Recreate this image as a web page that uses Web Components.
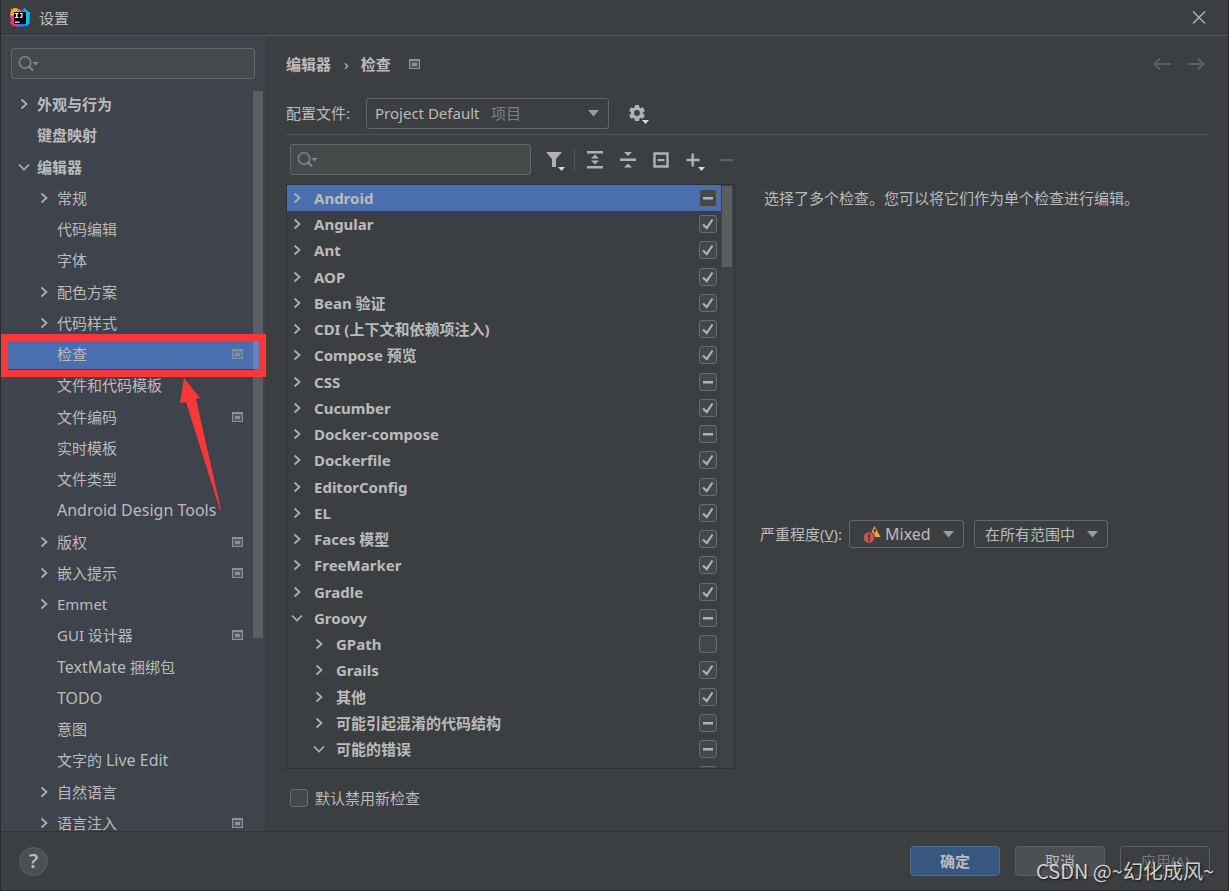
<!DOCTYPE html>
<html lang="zh-CN">
<head>
<meta charset="utf-8">
<title>设置</title>
<style>
  html, body { margin: 0; height: 100%; background: #3c3f41; }
  body { font: 15px/20px "Noto Sans", "Noto Sans CJK SC", sans-serif; color: #bbbbbb; overflow: hidden; }
</style>
</head>
<body>
<settings-dialog></settings-dialog>

<script>
const reset = `
  *, *::before, *::after { box-sizing: border-box; }
  button, input, select { font: inherit; color: inherit; margin: 0; }
  button { background: none; border: 0; padding: 0; }
  a { color: inherit; text-decoration: none; }
  :host([hidden]) { display: none; }
`;

function define(name, css, render, after) {
  customElements.define(name, class extends HTMLElement {
    constructor() {
      super();
      this.attachShadow({ mode: 'open' });
    }
    connectedCallback() {
      if (this.shadowRoot.childNodes.length) return;
      const t = document.createElement('template');
      t.innerHTML = `<style>${reset}${css}</style>${render(this)}`;
      this.shadowRoot.append(t.content.cloneNode(true));
      if (after) after(this, this.shadowRoot);
    }
  });
}

const icons = {
  right: [16, 16, '<path d="M5.500 3.500 10.500 8 5.500 12.500" fill="none" stroke="#afb1b3" stroke-width="1.700"/>'],
  down: [16, 16, '<path d="M3 5.500 8 10.500 13 5.500" fill="none" stroke="#afb1b3" stroke-width="1.700"/>'],
  project: [11, 10, '<path fill="#87939a" fill-rule="evenodd" d="M0 0h11v10H0zM1 2v7h9V2z"/><path fill="#87939a" fill-opacity=".3" d="M1 2h9v7H1z"/><path fill="#87939a" d="M3 4h5v3H3z"/>'],
  search: [22, 18, '<circle cx="7" cy="7.500" r="5.700" fill="none" stroke="#7c8a92" stroke-width="1.500"/><path d="m11 11.500 4 4" stroke="#7c8a92" stroke-width="2"/><path d="M14.500 7h6l-3 3.500z" fill="#7c8a92"/>'],
  caret: [12, 8, '<path d="M1 1h11L6.500 7.500z" fill="#9a9da0"/>'],
  close: [14, 14, '<path d="M1 1.500 13 13.500M13 1.500 1 13.500" stroke="#b9bbbd" stroke-width="1.200"/>'],
  back: [18, 14, '<path d="M17 7H2M7 1.500 1.500 7 7 12.500" fill="none" stroke="#5d6062" stroke-width="2"/>'],
  forward: [18, 14, '<path d="M1 7h15M11 1.500 16.500 7 11 12.500" fill="none" stroke="#5d6062" stroke-width="2"/>'],
  gear: [26, 26, '<g transform="translate(12 13)" fill="#afb1b3"><path d="M-2-8h4l.6 3h-5.200zM-2 8h4l.6-3h-5.200z"/><path transform="rotate(60)" d="M-2-8h4l.6 3h-5.200zM-2 8h4l.6-3h-5.200z"/><path transform="rotate(120)" d="M-2-8h4l.6 3h-5.200zM-2 8h4l.6-3h-5.200z"/><circle r="4.500" fill="none" stroke="#afb1b3" stroke-width="3.200"/></g><path d="M17 20h7l-3.500 4z" fill="#d5d7d9"/>'],
  filter: [26, 26, '<path d="M4 5h16l-6 7v8h-4v-8z" fill="#afb1b3"/><path d="M16 20h7l-3.500 4z" fill="#d5d7d9"/>'],
  expand: [26, 26, '<path d="M5 4h16v2.500H5zM5 19h16v2.500H5zM13 7.500l4 4H9zM13 17.500l4-4H9z" fill="#afb1b3"/>'],
  collapse: [26, 26, '<path d="M5 11.500h16V14H5zM9 5h8l-4 4zM9 20.500h8l-4-4z" fill="#afb1b3"/>'],
  reset: [26, 26, '<path d="M6.500 6.500h13v13h-13z" fill="none" stroke="#afb1b3" stroke-width="2.400"/><path d="M9.500 12h7v2.200h-7z" fill="#afb1b3"/>'],
  plus: [26, 26, '<path d="M10.500 6.500h2.400v5.300h5.600v2.400h-5.600v5.300h-2.400v-5.300H5.500v-2.400h5z" fill="#afb1b3"/><path d="M17 20h7l-3.500 4z" fill="#d5d7d9"/>'],
  minus: [26, 26, '<path d="M6 12h13v2.200H6z" fill="#5f6264"/>'],
  mixed: [18, 18, '<path d="M11.500 1 17.500 12H6z" fill="#f0a732"/><path d="M10.800 4h2v3.500h-2z" fill="#3c3f41"/><circle cx="6" cy="12.500" r="6" fill="#3c3f41"/><circle cx="6" cy="12.500" r="5.300" fill="#c75450"/><path d="M5 9.200h2v4H5zM5 14.300h2v1.800H5z" fill="#3c3f41"/>'],
  logo: [20, 20, '<path d="M1 1 6 0l6 3-6 9-6-3z" fill="#fc801d"/><path d="M0 8l4-2 7 7-1 6-7-1-3-3 1-3z" fill="#fe2889"/><path d="M4 0l4 1-5 7-3-1z" fill="#fdb60d"/><path d="M12 2l2-2 5 4 1 12-8 3-4 0 1-5z" fill="#087cfa"/><path d="M14 0l4 4 2 0-1 11-3 4-1-13z" fill="#07c3f2"/><path d="M4 4h12v12H4z"/><path d="M5 5h3.500v1H7.400v3h1.100v1H5V9h1.100V6H5zM10 5h2.500v3.500c0 1-.6 1.500-1.500 1.500-.7 0-1.200-.3-1.500-.7l.7-.7c.5.500 1.100.4 1.100-.2V6H10zM5 13.500h4.500v1.200H5z" fill="#fff"/>']
};

define('ui-icon', `:host { display: inline-flex; flex: none; } svg { display: block; }`, el => {
  const [w, h, body] = icons[el.getAttribute('name')];
  return `<svg width="${w}" height="${h}" viewBox="0 0 ${w} ${h}" aria-hidden="true">${body}</svg>`;
});

define('search-box', `
  :host { display: grid; align-items: center; height: 31px; }
  input { grid-area: 1 / 1; width: 100%; height: 100%; padding: 0 8px 0 32px; background: #45494a;
    border: 1px solid #646768; border-radius: 3px; outline: none; }
  ui-icon { grid-area: 1 / 1; margin-left: 7px; pointer-events: none; z-index: 1; }
`, el => `<input type="text" aria-label="${el.getAttribute('label')}"><ui-icon name="search"></ui-icon>`);

define('nav-item', `
  :host { display: block; height: 31px; }
  :host(:nth-child(4n + 2)) { height: 32px; }
  a { display: flex; align-items: center; height: 100%; padding: 0 22px 0 15px; }
  :host([level="1"]) a { padding-left: 35px; }
  :host([bold]) { font-weight: 700; }
  :host([selected]) { background: #4b6eaf; }
  .arrow { width: 16px; margin-right: 5px; display: flex; }
  .name { flex: 1; white-space: nowrap; }
  ::slotted(span) { font-size: 16px; }
`, el => `<a href="#"><span class="arrow">${el.hasAttribute('arrow') ? `<ui-icon name="${el.getAttribute('arrow')}"></ui-icon>` : ''}</span>
  <span class="name"><slot></slot></span>${el.hasAttribute('project') ? '<ui-icon name="project"></ui-icon>' : ''}</a>`);

define('check-box', `
  :host { display: inline-flex; }
  label { display: flex; align-items: center; gap: 7px; }
  .box { display: grid; }
  .box > * { grid-area: 1 / 1; }
  input { appearance: none; width: 18px; height: 18px; background: #43494a; border: 1px solid #6b6b6b; border-radius: 3px; }
  svg { display: none; pointer-events: none; z-index: 1; }
  input:checked ~ .on, input:indeterminate ~ .mix { display: block; }
`, el => `<label><span class="box"><input type="checkbox" ${el.getAttribute('state') === 'on' ? 'checked' : ''} ${el.hasAttribute('label') ? `aria-label="${el.getAttribute('label')}"` : ''}>
  <svg class="on" width="18" height="18"><path d="M4 9.500 7.700 13 13.500 4.500" fill="none" stroke="#afb1b3" stroke-width="2.200"/></svg>
  <svg class="mix" width="18" height="18"><path d="M4 8h10v2.500H4z" fill="#afb1b3"/></svg></span><slot></slot></label>`,
(el, root) => { root.querySelector('input').indeterminate = el.getAttribute('state') === 'mix'; });

define('inspection-row', `
  :host { display: flex; align-items: center; height: 26px; flex: none; padding: 0 4px 0 2px; font-weight: 700; }
  :host(:nth-child(4n)) { height: 27px; }
  :host([level="1"]) { padding-left: 24px; }
  :host([selected]) { background: #4b6eaf; }
  button { display: flex; width: 16px; margin-right: 9px; }
  .name { flex: 1; white-space: nowrap; }
`, el => `<button type="button" aria-label="展开"><ui-icon name="${el.hasAttribute('open') ? 'down' : 'right'}"></ui-icon></button>
  <span class="name"><slot></slot></span><check-box state="${el.getAttribute('state')}" label="${el.textContent}"></check-box>`);

define('tool-button', `
  :host { display: block; }
  button { display: grid; place-items: center; width: 32px; height: 26px; }
`, el => `<button type="button" aria-label="${el.getAttribute('label')}"><ui-icon name="${el.getAttribute('icon')}"></ui-icon></button>`);

define('drop-down', `
  :host { display: grid; align-items: center; height: 28px; }
  select { grid-area: 1 / 1; appearance: none; width: 100%; height: 100%; padding: 0 28px 0 var(--inset, 8px);
    background: #3c3f41; border: 1px solid #646768; border-radius: 3px; outline: none; }
  slot, .caret { grid-area: 1 / 1; pointer-events: none; z-index: 1; }
  .caret { justify-self: end; margin-right: 10px; }
  ::slotted(*) { grid-area: 1 / 1; z-index: 1; pointer-events: none; }
`, el => `<select aria-label="${el.getAttribute('label')}"><option>${el.getAttribute('value')}</option></select>
  <slot></slot><ui-icon class="caret" name="caret"></ui-icon>`);

define('push-button', `
  :host { display: block; }
  button { width: 90px; height: 30px; border: 1px solid #5e6060; border-radius: 4px; background: #4c5052; }
  :host([primary]) button { background: #365880; border-color: #4c708c; font-weight: 700; }
  :host([disabled]) button { background: #3c3f41; color: #777777; }
`, el => `<button type="button" ${el.hasAttribute('disabled') ? 'disabled' : ''}><slot></slot></button>`);

define('scroll-thumb', `
  :host { display: block; background: rgba(255, 255, 255, .15); }
`, () => '');

define('title-bar', `
  :host { display: flex; align-items: center; height: 36px; padding: 0 22px 0 9px; border-bottom: 1px solid #515456; }
  h1 { flex: 1; margin: 0 0 0 9px; font: inherit; }
`, () => `<ui-icon name="logo"></ui-icon><h1>设置</h1><button type="button" aria-label="关闭"><ui-icon name="close"></ui-icon></button>`);

/* rows: [name, level, arrow, project marker] */
const nav = [
  ['外观与行为', 0, 'right'], ['键盘映射', 0], ['编辑器', 0, 'down'], ['常规', 1, 'right'], ['代码编辑', 1],
  ['字体', 1], ['配色方案', 1, 'right'], ['代码样式', 1, 'right'], ['检查', 1, '', 1], ['文件和代码模板', 1],
  ['文件编码', 1, '', 1], ['实时模板', 1], ['文件类型', 1], ['<span>Android Design Tools</span>', 1], ['版权', 1, 'right', 1],
  ['嵌入提示', 1, 'right', 1], ['Emmet', 1, 'right'], ['GUI 设计器', 1, '', 1], ['<span>TextMate</span> 捆绑包', 1], ['<span>TODO</span>', 1],
  ['意图', 1], ['文字的 <span>Live Edit</span>', 1], ['自然语言', 1, 'right'], ['语言注入', 1, 'right', 1]
];

define('side-bar', `
  :host { position: relative; display: flex; flex-direction: column; min-height: 0; background: #3e434c; }
  search-box { margin: 12px 10px 9px; flex: none; }
  nav { flex: 1; min-height: 0; overflow: hidden; }
  scroll-thumb { position: absolute; right: 2px; top: 55px; width: 10px; height: 547px; }
  .frame { position: absolute; left: 0; right: -1px; top: 298px; height: 43px; border: 7px solid #fd3737; z-index: 2; pointer-events: none; }
  .pointer { position: absolute; left: 177px; top: 341px; z-index: 2; pointer-events: none; }
`, () => `<search-box label="搜索设置"></search-box><nav aria-label="设置">${nav.map(([n, l, a, p]) =>
  `<nav-item level="${l}" ${l ? '' : 'bold'} ${a ? `arrow="${a}"` : ''} ${p ? 'project' : ''} ${n === '检查' ? 'selected' : ''}>${n}</nav-item>`).join('')}</nav>
  <scroll-thumb></scroll-thumb><div class="frame"></div>
  <svg class="pointer" width="44" height="136" aria-hidden="true"><path d="M6 1 22 21 18 22 43 133 42 133 8 25 2 26z" fill="#fd3737"/></svg>`);

/* rows: [name, state, level, open] */
const rows = [
  ['Android', 'mix'], ['Angular', 'on'], ['Ant', 'on'], ['AOP', 'on'], ['Bean 验证', 'on'], ['CDI (上下文和依赖项注入)', 'on'],
  ['Compose 预览', 'on'], ['CSS', 'mix'], ['Cucumber', 'on'], ['Docker-compose', 'mix'], ['Dockerfile', 'on'],
  ['EditorConfig', 'on'], ['EL', 'on'], ['Faces 模型', 'on'], ['FreeMarker', 'on'], ['Gradle', 'on'],
  ['Groovy', 'mix', 0, 1], ['GPath', 'off', 1], ['Grails', 'on', 1], ['其他', 'on', 1],
  ['可能引起混淆的代码结构', 'mix', 1], ['可能的错误', 'mix', 1, 1]
];

define('inspection-list', `
  :host { display: grid; grid-template-columns: 1fr 13px; min-height: 0; border: 1px solid #2f3133; overflow: hidden; }
  .rows { display: flex; flex-direction: column; min-height: 0; overflow: hidden; }
  .track { background: #3f4244; }
  scroll-thumb { margin: 1px 2px 0 1px; height: 81px; }
  .next { flex: none; align-self: end; margin: 4px 4px 0 0; }
`, () => `<div class="rows">${rows.map(([n, s, l = 0, o], i) =>
  `<inspection-row level="${l}" state="${s}" ${o ? 'open' : ''} ${i ? '' : 'selected'}>${n}</inspection-row>`).join('')}
  <check-box class="next" state="off" label="下一项"></check-box></div>
  <div class="track"><scroll-thumb></scroll-thumb></div>`);

define('inspections-page', `
  :host { display: flex; flex-direction: column; min-width: 0; min-height: 0; padding: 0 20px 0 21px; }
  header { display: flex; align-items: center; height: 56px; padding-right: 3px; font-weight: 700; }
  header .sep { margin: 0 12px 0 13px; font-weight: 400; }
  header .grow { flex: 1; }
  header ui-icon { margin-left: 18px; }
  header button { display: flex; }
  header button ui-icon { margin-left: 16px; }
  .profile { display: flex; align-items: center; height: 43px; border-bottom: 1px solid #515456; }
  .profile drop-down { width: 243px; height: 31px; margin: 0 13px 0 16px; }
  .profile .scope { margin-left: 125px; color: #808080; }
  .tools { display: flex; align-items: center; gap: 1px; height: 49px; padding-left: 4px; }
  .tools search-box { width: 241px; margin-right: 7px; }
  .tools i { width: 1px; height: 24px; background: #515456; margin: 0 3px 0 2px; }
  .split { flex: 1; min-height: 0; display: grid; grid-template-columns: 1fr 1fr; gap: 24px; }
  .detail { display: grid; grid-template-rows: 336px auto; align-content: start; padding-left: 1px; }
  .detail p { margin: 4px; }
  .severity { display: flex; align-items: center; }
  .severity .mixed { width: 115px; margin: 0 10px 0 7px; --inset: 35px; font-size: 16px; }
  .severity .mixed ui-icon { margin-left: 14px; }
  .severity .mixed, .severity .scopes { flex: none; }
  .severity .scopes { width: 134px; --inset: 10px; }
  footer { display: flex; align-items: center; height: 62px; padding: 0 0 4px 4px; }
`, () => `<header><span>编辑器</span><span class="sep">›</span><span>检查</span><ui-icon name="project"></ui-icon><span class="grow"></span>
    <button type="button" aria-label="后退"><ui-icon name="back"></ui-icon></button>
    <button type="button" aria-label="前进"><ui-icon name="forward"></ui-icon></button></header>
  <div class="profile"><span>配置文件:</span><drop-down label="配置文件" value="Project Default"><span class="scope">项目</span></drop-down>
    <tool-button icon="gear" label="配置文件操作"></tool-button></div>
  <div class="tools"><search-box label="搜索检查"></search-box><tool-button icon="filter" label="筛选"></tool-button><i></i>
    <tool-button icon="expand" label="全部展开"></tool-button><tool-button icon="collapse" label="全部收起"></tool-button>
    <tool-button icon="reset" label="重置"></tool-button><tool-button icon="plus" label="添加"></tool-button><tool-button icon="minus" label="移除"></tool-button></div>
  <div class="split"><inspection-list></inspection-list>
    <div class="detail"><p>选择了多个检查。您可以将它们作为单个检查进行编辑。</p>
      <div class="severity"><span>严重程度(<u>V</u>):</span><drop-down class="mixed" label="严重程度" value="Mixed"><ui-icon name="mixed"></ui-icon></drop-down>
      <drop-down class="scopes" label="范围" value="在所有范围中"></drop-down></div></div></div>
  <footer><check-box state="off">默认禁用新检查</check-box></footer>`);

define('action-bar', `
  :host { position: relative; display: flex; align-items: center; gap: 15px; height: 59px; padding: 0 18px; border-top: 1px solid #313436; }
  .help { width: 29px; height: 29px; margin-right: auto; border-radius: 50%; background: #4c5052; border: 1px solid #5e6060; font-size: 20px; font-weight: 600; }
  .mark { position: absolute; right: 14px; bottom: 4px; font: 20px/30px "Noto Sans CJK SC", sans-serif; color: #d0d0d0; text-shadow: 1px 1px 2px #111; white-space: nowrap; pointer-events: none; }
`, () => `<button class="help" type="button" aria-label="帮助">?</button><push-button primary>确定</push-button><push-button>取消</push-button>
  <push-button disabled>应用(<u>A</u>)</push-button><span class="mark">CSDN @~幻化成风~</span>`);

define('settings-dialog', `
  :host { display: flex; flex-direction: column; height: 100vh; border: solid #2b2b2b; border-width: 0 1px 1px; background: #3c3f41; box-sizing: border-box; }
  main { flex: 1; min-height: 0; display: grid; grid-template: minmax(0, 1fr) / 264px minmax(0, 1fr); }
`, () => `<title-bar></title-bar><main><side-bar></side-bar><inspections-page></inspections-page></main><action-bar></action-bar>`);
</script>
</body>
</html>
